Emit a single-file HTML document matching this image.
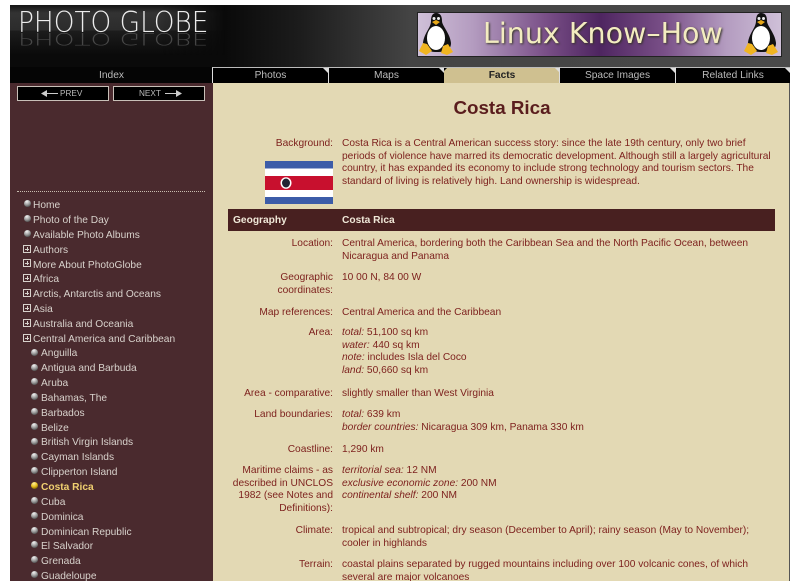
<!DOCTYPE html>
<html><head><meta charset="utf-8"><style>
html,body{margin:0;padding:0;background:#fff;width:800px;height:581px;overflow:hidden}
body{position:relative;font:10.2px/12.65px "Liberation Sans",sans-serif}
.a{position:absolute;white-space:nowrap}
.m{position:absolute;white-space:nowrap;color:#d8d2cc;font-size:10.2px;line-height:13px}
.b{position:absolute;width:7px;height:7px;border-radius:50%;background:radial-gradient(circle at 40% 22%,#f4f4f4,#a0a0a0 45%,#444 85%)}
.p{position:absolute;width:8px;height:8px;border:1px solid #d8d2cc;box-sizing:border-box;background:linear-gradient(#d8d2cc,#d8d2cc) center/4px 1px no-repeat,linear-gradient(#d8d2cc,#d8d2cc) center/1px 4px no-repeat}
.l{position:absolute;left:229px;width:104px;text-align:right;color:#7c1f1c;white-space:nowrap}
.t{position:absolute;left:342px;color:#7c1f1c;white-space:nowrap}
.tab{position:absolute;top:67px;height:16px;background:#000;color:#bbb;text-align:center;line-height:16px;font-size:10.2px;box-sizing:border-box;border-left:1px solid #ddd;border-top:1px solid #bbb}
.tab:after{content:"";position:absolute;right:0;top:0;border-top:5px solid #ddd;border-left:5px solid transparent}
.btn{position:absolute;top:86px;height:15px;background:#000;border:1px solid #c8c0b8;box-sizing:border-box;color:#bbb;font-size:8.2px;line-height:13px}
.logo{font-family:"DejaVu Sans",sans-serif;font-weight:200;font-size:28.8px;line-height:34px;transform-origin:0 27px}
</style></head><body>
<div class="a" style="left:10px;top:5px;width:780px;height:62px;background:linear-gradient(90deg,#0a0a0a 0,#0a0a0a 215px,#1c1c1c 290px,#444 400px,#4a4a4a 100%)"></div>
<div class="a" style="left:10px;top:5px;width:215px;height:50px;background:linear-gradient(#151515 0,#333 8px,#2c2c2c 25px,#1c1c1c 26px,#0a0a0a 50px);-webkit-mask-image:linear-gradient(90deg,#000 70%,transparent)"></div>
<div class="a logo" style="left:18px;top:5px;color:#ececec;transform:scaleX(.915)">PHOTO GLOBE</div>
<div class="a logo" style="left:18px;top:6px;color:#888;transform:scale(.915,-.6);opacity:.45">PHOTO GLOBE</div>

<div class="a" style="left:417px;top:12px;width:365px;height:45px;box-sizing:border-box;border:1px solid #222;background:linear-gradient(90deg,#cfc0d8 0,#b49cc0 15%,#7a5088 35%,#4e2560 50%,#7a5088 68%,#b49cc0 85%,#cfc0d8 100%)"></div>
<div class="a" style="left:483px;top:14px;font-family:'DejaVu Sans',sans-serif;font-size:28.5px;line-height:40px;color:#f3ecc0;text-shadow:1px 1px 2px #332">Linux Know–How</div>
<svg class="a" style="left:419px;top:13px" width="36" height="43" viewBox="0 0 36 43"><path d="M17 0c5 0 6 4 6 8 0 5 8 12 9 22 0 6-4 9-14 9S3 36 4 30c1-10 8-15 8-22 0-4 1-8 5-8z" fill="#111"/><ellipse cx="17" cy="25" rx="9" ry="12" fill="#fff"/><path d="M13 9l4-2 4 2-4 3z" fill="#e8a818"/><path d="M0 38l4-8 4 1 5 7-6 4zM22 40l2-7 5-2 5 8-6 3z" fill="#f0b420"/><circle cx="15" cy="5.500" r="1.500" fill="#eee"/><circle cx="19.500" cy="5.500" r="1.500" fill="#eee"/></svg>
<svg class="a" style="left:744px;top:13px" width="36" height="43" viewBox="0 0 36 43"><path d="M17 0c5 0 6 4 6 8 0 5 8 12 9 22 0 6-4 9-14 9S3 36 4 30c1-10 8-15 8-22 0-4 1-8 5-8z" fill="#111"/><ellipse cx="17" cy="25" rx="9" ry="12" fill="#fff"/><path d="M13 9l4-2 4 2-4 3z" fill="#e8a818"/><path d="M0 38l4-8 4 1 5 7-6 4zM22 40l2-7 5-2 5 8-6 3z" fill="#f0b420"/><circle cx="15" cy="5.500" r="1.500" fill="#eee"/><circle cx="19.500" cy="5.500" r="1.500" fill="#eee"/></svg>

<div class="a" style="left:10px;top:67px;width:203px;height:16px;background:#050505;color:#bbb;text-align:center;line-height:17px;font-size:10.2px">Index</div>
<div class="tab" style="left:212px;width:116px">Photos</div>
<div class="tab" style="left:328px;width:116px">Maps</div>
<div class="tab" style="left:444px;width:116px;background:#cfc090;color:#222;font-weight:bold;border-left:0">Facts<span style="position:absolute;left:0;top:0;border-top:3px solid #000;border-right:3px solid transparent"></span></div>
<div class="tab" style="left:559px;width:116px">Space Images</div>
<div class="tab" style="left:675px;width:115px">Related Links</div>

<div class="a" style="left:10px;top:83px;width:203px;height:498px;background:#4a2a2e"></div>
<div class="a" style="left:213px;top:83px;width:576px;height:498px;background:#e3d9b4"></div>
<div class="a" style="left:789px;top:83px;width:1px;height:498px;background:#555"></div>

<div class="btn" style="left:17px;width:92px"><svg class="a" style="left:23px;top:3px" width="18" height="7" viewBox="0 0 18 7"><path d="M0 3.500L6 0v3h11v1H6v3z" fill="#ccc"/></svg><span class="a" style="left:42px;top:0">PREV</span></div>
<div class="btn" style="left:113px;width:92px"><span class="a" style="left:25px;top:0">NEXT</span><svg class="a" style="left:50px;top:3px" width="18" height="7" viewBox="0 0 18 7"><path d="M18 3.500L12 0v3H1v1h11v3z" fill="#ccc"/></svg></div>
<div class="a" style="left:17px;top:191px;width:188px;border-top:1px dotted #c8bdb0"></div>

<div class="b" style="left:24px;top:200px"></div><div class="m" style="left:33px;top:199px">Home</div>
<div class="b" style="left:24px;top:215px"></div><div class="m" style="left:33px;top:214px">Photo of the Day</div>
<div class="b" style="left:24px;top:230px"></div><div class="m" style="left:33px;top:229px">Available Photo Albums</div>
<div class="p" style="left:23px;top:245px"></div><div class="m" style="left:33px;top:244px">Authors</div>
<div class="p" style="left:23px;top:259px"></div><div class="m" style="left:33px;top:259px">More About PhotoGlobe</div>
<div class="p" style="left:23px;top:274px"></div><div class="m" style="left:33px;top:273px">Africa</div>
<div class="p" style="left:23px;top:289px"></div><div class="m" style="left:33px;top:288px">Arctis, Antarctis and Oceans</div>
<div class="p" style="left:23px;top:304px"></div><div class="m" style="left:33px;top:303px">Asia</div>
<div class="p" style="left:23px;top:319px"></div><div class="m" style="left:33px;top:318px">Australia and Oceania</div>
<div class="p" style="left:23px;top:334px"></div><div class="m" style="left:33px;top:333px">Central America and Caribbean</div>
<div class="b" style="left:31px;top:349px"></div><div class="m" style="left:41px;top:347px">Anguilla</div>
<div class="b" style="left:31px;top:364px"></div><div class="m" style="left:41px;top:362px">Antigua and Barbuda</div>
<div class="b" style="left:31px;top:378px"></div><div class="m" style="left:41px;top:377px">Aruba</div>
<div class="b" style="left:31px;top:393px"></div><div class="m" style="left:41px;top:392px">Bahamas, The</div>
<div class="b" style="left:31px;top:408px"></div><div class="m" style="left:41px;top:407px">Barbados</div>
<div class="b" style="left:31px;top:423px"></div><div class="m" style="left:41px;top:422px">Belize</div>
<div class="b" style="left:31px;top:438px"></div><div class="m" style="left:41px;top:436px">British Virgin Islands</div>
<div class="b" style="left:31px;top:453px"></div><div class="m" style="left:41px;top:451px">Cayman Islands</div>
<div class="b" style="left:31px;top:467px"></div><div class="m" style="left:41px;top:466px">Clipperton Island</div>
<div class="b" style="left:31px;top:482px;background:radial-gradient(circle at 40% 22%,#fff2a0,#e8c020 45%,#6a5000 85%)"></div><div class="m" style="left:41px;top:481px;color:#f0d070;font-weight:bold">Costa Rica</div>
<div class="b" style="left:31px;top:497px"></div><div class="m" style="left:41px;top:496px">Cuba</div>
<div class="b" style="left:31px;top:512px"></div><div class="m" style="left:41px;top:511px">Dominica</div>
<div class="b" style="left:31px;top:527px"></div><div class="m" style="left:41px;top:526px">Dominican Republic</div>
<div class="b" style="left:31px;top:541px"></div><div class="m" style="left:41px;top:540px">El Salvador</div>
<div class="b" style="left:31px;top:556px"></div><div class="m" style="left:41px;top:555px">Grenada</div>
<div class="b" style="left:31px;top:571px"></div><div class="m" style="left:41px;top:570px">Guadeloupe</div>

<div class="a" style="left:214px;top:96px;width:576px;text-align:center;font-size:18.800px;line-height:24px;font-weight:bold;color:#5a1d1d">Costa Rica</div>

<div class="l" style="top:138px">Background:</div>
<div class="t" style="top:138px">Costa Rica is a Central American success story: since the late 19th century, only two brief<br>periods of violence have marred its democratic development. Although still a largely agricultural<br>country, it has expanded its economy to include strong technology and tourism sectors. The<br>standard of living is relatively high. Land ownership is widespread.</div>

<svg class="a" style="left:265px;top:161px" width="68" height="43" viewBox="0 0 68 43"><rect width="68" height="43" fill="#3c5ca8"/><rect y="7.500" width="68" height="28.500" fill="#fff"/><rect y="15" width="68" height="14" fill="#c8102e"/><ellipse cx="21" cy="22" rx="5.500" ry="5.800" fill="#fff"/><ellipse cx="21" cy="22" rx="4" ry="4.500" fill="#223"/></svg>

<div class="a" style="left:228px;top:209px;width:547px;height:22px;background:#482020"></div>
<div class="a" style="left:233px;top:214px;line-height:14.650px;color:#f0e8d8;font-weight:bold">Geography</div>
<div class="a" style="left:342px;top:214px;line-height:14.650px;color:#f0e8d8;font-weight:bold">Costa Rica</div>

<div class="l" style="top:238px">Location:</div>
<div class="t" style="top:238px">Central America, bordering both the Caribbean Sea and the North Pacific Ocean, between<br>Nicaragua and Panama</div>
<div class="l" style="top:272px">Geographic<br>coordinates:</div>
<div class="t" style="top:272px">10 00 N, 84 00 W</div>
<div class="l" style="top:307px">Map references:</div>
<div class="t" style="top:307px">Central America and the Caribbean</div>
<div class="l" style="top:327px">Area:</div>
<div class="t" style="top:327px"><i>total:</i> 51,100 sq km<br><i>water:</i> 440 sq km<br><i>note:</i> includes Isla del Coco<br><i>land:</i> 50,660 sq km</div>
<div class="l" style="top:388px">Area - comparative:</div>
<div class="t" style="top:388px">slightly smaller than West Virginia</div>
<div class="l" style="top:409px">Land boundaries:</div>
<div class="t" style="top:409px"><i>total:</i> 639 km<br><i>border countries:</i> Nicaragua 309 km, Panama 330 km</div>
<div class="l" style="top:444px">Coastline:</div>
<div class="t" style="top:444px">1,290 km</div>
<div class="l" style="top:465px">Maritime claims - as<br>described in UNCLOS<br>1982 (see Notes and<br>Definitions):</div>
<div class="t" style="top:465px"><i>territorial sea:</i> 12 NM<br><i>exclusive economic zone:</i> 200 NM<br><i>continental shelf:</i> 200 NM</div>
<div class="l" style="top:525px">Climate:</div>
<div class="t" style="top:525px">tropical and subtropical; dry season (December to April); rainy season (May to November);<br>cooler in highlands</div>
<div class="l" style="top:559px">Terrain:</div>
<div class="t" style="top:559px">coastal plains separated by rugged mountains including over 100 volcanic cones, of which<br>several are major volcanoes</div>
</body></html>
